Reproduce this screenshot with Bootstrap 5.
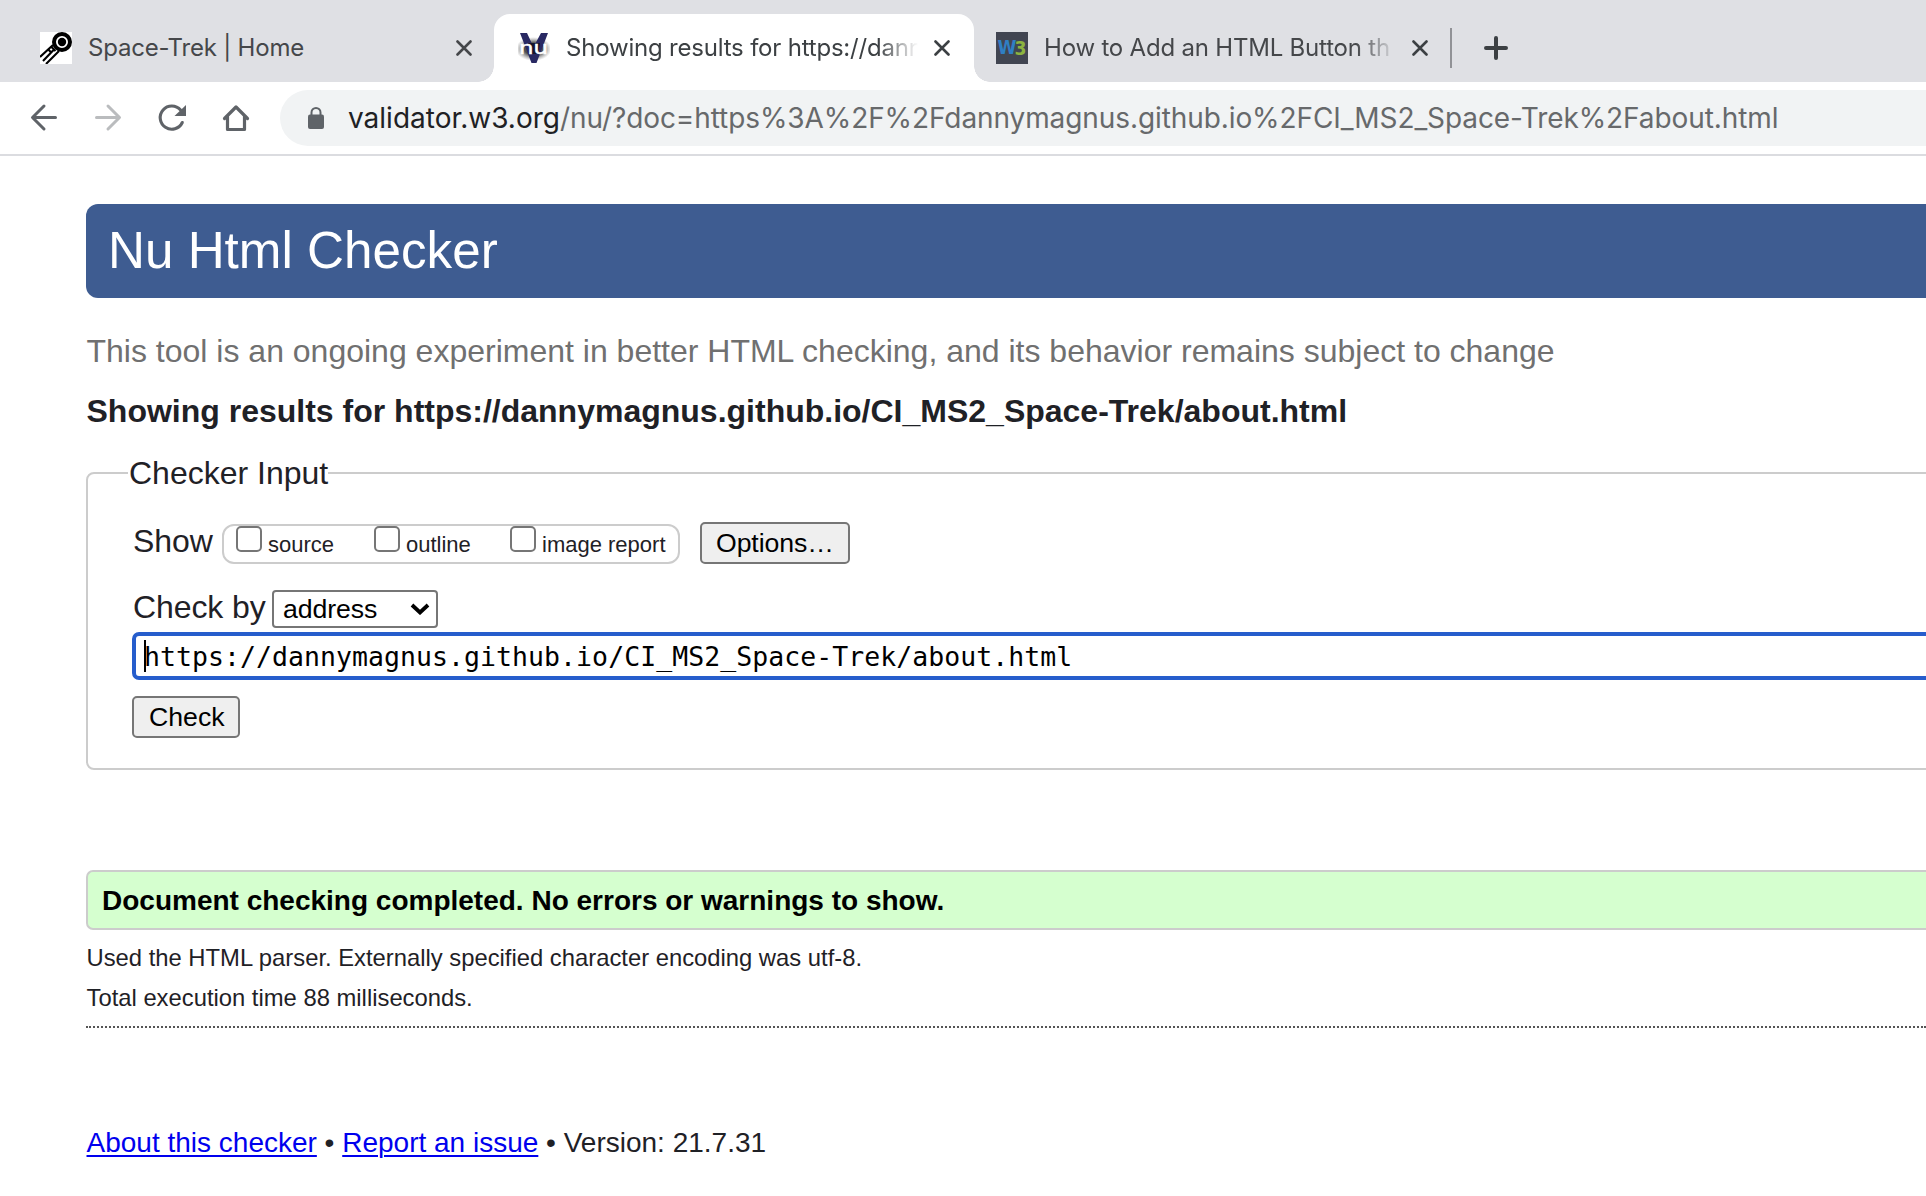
<!DOCTYPE html>
<html lang="en">
<head>
<meta charset="utf-8">
<title>Showing results for https://dannymagnus.github.io/CI_MS2_Space-Trek/about.html</title>
<link href="https://cdn.jsdelivr.net/npm/bootstrap@5.3.0/dist/css/bootstrap.min.css" rel="stylesheet">
<style>
  body { font-family: "Liberation Sans", Arial, sans-serif; color: #1f2126; background: #fff; overflow: hidden; }

  /* browser chrome */
  .chrome-ui { font-family: Inter, Roboto, sans-serif; }
  .tab-strip { height: 82px; padding-top: 14px; background: #dfe0e4; }
  .tab-item { height: 68px; color: #45474a; font-size: 24px; line-height: 67px; }
  .tab-first { width: 494px; padding: 0 22px 0 40px; }
  .tab-active { width: 480px; padding: 0 24px 0 24px; background: #fff; border-radius: 16px 16px 0 0; color: #3c4043; }
  .tab-active::before, .tab-active::after { content: ""; position: absolute; bottom: 0; width: 16px; height: 16px; }
  .tab-active::before { left: -16px; background: radial-gradient(circle at 0 0, transparent 15.5px, #fff 16px); }
  .tab-active::after { right: -16px; background: radial-gradient(circle at 100% 0, transparent 15.5px, #fff 16px); }
  .tab-last { width: 476px; padding: 0 22px; }
  .tab-title { height: 68px; margin-left: 16px; overflow: hidden; letter-spacing: -.2px; }
  .fade-title { -webkit-mask-image: linear-gradient(90deg, #000 calc(100% - 40px), transparent); mask-image: linear-gradient(90deg, #000 calc(100% - 40px), transparent); }
  .tab-close { margin-left: 16px; }
  .tab-rule { width: 2px; height: 40px; background: #919296; }
  .new-tab { margin-left: 32px; }

  .tool-strip { height: 74px; border-bottom: 2px solid #dbdce0; padding: 8px 0 8px 28px; }
  .nav-icons { gap: 32px; width: 252px; height: 56px; }
  .omnibox { height: 56px; border-radius: 28px 0 0 28px; background: #f1f3f4; padding-left: 28px; color: #67696b; font-size: 28px; line-height: 56px; letter-spacing: -.09px; }
  .omnibox .host { color: #202124; letter-spacing: 0; }
  .omnibox-url { margin-left: 24px; }

  /* checker page */
  .checker-page { padding: 48px 0 0 86px; }
  .banner { height: 94px; line-height: 93px; padding-left: 22px; border-radius: 12px 0 0 12px; background: #3e5c91; color: #fff; font-size: 51.2px; font-weight: 400; }
  .tagline { margin-top: 33px; font-size: 32px; line-height: 40px; color: #707070; }
  .results-title { margin-top: 20px; font-size: 32px; line-height: 40px; font-weight: 700; }
  .tagline, .results-title, .details div, .about { text-indent: .5px; }
  .input-set { height: 315px; margin: 24px -20px 0 0; border: 2px solid #ccc; border-radius: 8px; padding: 31px 0 0 44px; }
  .input-set legend { float: none; width: 200px; height: 36px; margin: 0 0 0 -4px; padding: 0 0 0 1px; font-size: 32px; line-height: 36px; white-space: nowrap; }
  .big-label { font-size: 32px; line-height: 38px; padding-left: 1px; letter-spacing: -.1px; }
  .show-label { width: 90px; }
  .by-label { width: 140px; line-height: 34px; }
  .show-box { width: 458px; height: 40px; margin-top: 2px; padding-left: 12px; border: 2px solid #ccc; border-radius: 12px; font-size: 22px; line-height: 38px; }
  .tick { appearance: none; width: 26px; height: 26px; margin: 0 6px 0 0; border: 2px solid #767676; border-radius: 5px; background: #fff; }
  .ui-btn { height: 42px; border: 2px solid #767676; border-radius: 5px; background: #efefef; color: #000; font-size: 26.67px; line-height: 38px; padding: 0 0 0 15px; text-align: left; }
  .btn-options { width: 150px; margin-left: 20px; padding-left: 14px; letter-spacing: -.1px; }
  .btn-check-doc { width: 108px; margin-top: 16px; }
  .by-select { width: 166px; height: 38px; border: 2px solid #767676; border-radius: 4px; padding: 0 6px 0 9px; color: #000; font-size: 26.67px; line-height: 34px; letter-spacing: -.1px; }
  .url-field { height: 48px; margin-top: 4px; border: 4px solid #265dcc; border-radius: 7px; padding-left: 8px; color: #000; font: 26.5px/41px "DejaVu Sans Mono", monospace; letter-spacing: .05px; }
  .caret { left: 8px; top: 4px; width: 2px; height: 32px; background: #000; }
  .success-box { height: 60px; margin-top: 100px; padding-left: 14px; border: 2px solid #ccc; border-right: 0; border-radius: 7px 0 0 7px; background: #d5ffcf; color: #000; font-size: 28px; line-height: 58px; font-weight: 700; }
  .details { margin-top: 8px; padding-bottom: 8px; border-bottom: 2px dotted #555; font-size: 23.8px; line-height: 40px; }
  .about { margin-top: 94px; font-size: 28px; line-height: 42px; }
  .about a { color: #00e; text-decoration: underline; text-decoration-thickness: 2px; text-underline-offset: 3px; }
</style>
<script src="https://cdn.jsdelivr.net/npm/bootstrap@5.3.0/dist/js/bootstrap.bundle.min.js"></script>
</head>
<body>
<header class="chrome-ui text-nowrap">
  <div class="tab-strip d-flex">
    <div class="tab-item tab-first d-flex align-items-center">
      <svg width="32" height="32" viewBox="0 0 32 32" class="flex-shrink-0"><path fill="#fff" d="M0 0h32v32H0z"/><circle cx="22" cy="10" r="8" fill="#fff" stroke="#000" stroke-width="4"/><circle cx="22" cy="10" r="4.2"/><path d="M13 13 0 25M19 19 6 32M14.500 17 3 29M8 17l3.500 4M11.500 15l4 4" stroke="#000" stroke-width="2.100" fill="none"/></svg>
      <div class="tab-title flex-grow-1">Space-Trek | Home</div>
      <svg width="16" height="16" viewBox="0 0 16 16"><path d="m1.500 1.500 13 13m0-13-13 13" stroke="#45474a" stroke-width="2.600" stroke-linecap="round"/></svg>
    </div>
    <div class="tab-item tab-active position-relative d-flex align-items-center">
      <svg width="32" height="32" viewBox="0 0 32 32" class="flex-shrink-0"><defs><radialGradient id="halo"><stop offset=".5" stop-color="#222" stop-opacity=".8"/><stop offset="1" stop-color="#777" stop-opacity="0"/></radialGradient></defs><ellipse cx="15.500" cy="17" rx="18" ry="12" fill="url(#halo)"/><path d="M2 1h7l6.500 14L23 1h7L18.500 31h-5z" fill="#292963"/><path d="M10 11h12l-2 11h-8z" fill="#15152c"/><text x="1" y="22" font-family="DejaVu Sans" font-size="18" fill="#fff" stroke="#fff" stroke-width=".5" textLength="29" lengthAdjust="spacingAndGlyphs">nu</text></svg>
      <div class="tab-title fade-title" style="width:352px">Showing results for https://dann</div>
      <svg width="16" height="16" viewBox="0 0 16 16" class="tab-close flex-shrink-0"><path d="m1.500 1.500 13 13m0-13-13 13" stroke="#3c4043" stroke-width="2.600" stroke-linecap="round"/></svg>
    </div>
    <div class="tab-item tab-last d-flex align-items-center">
      <svg width="32" height="32" viewBox="0 0 32 32" class="flex-shrink-0"><path fill="#414551" d="M0 0h32v32H0z"/><text x="1.500" y="22" font-family="DejaVu Sans" font-size="19" font-weight="700" fill="#2f7fc3" textLength="19" lengthAdjust="spacingAndGlyphs">W</text><text x="18.500" y="23" font-family="DejaVu Sans" font-size="20" font-weight="700" fill="#8cb43f" textLength="12" lengthAdjust="spacingAndGlyphs">3</text></svg>
      <div class="tab-title fade-title" style="width:352px">How to Add an HTML Button th</div>
      <svg width="16" height="16" viewBox="0 0 16 16" class="tab-close flex-shrink-0"><path d="m1.500 1.500 13 13m0-13-13 13" stroke="#3c4043" stroke-width="2.600" stroke-linecap="round"/></svg>
    </div>
    <div class="tab-item d-flex align-items-center">
      <div class="tab-rule"></div>
      <svg class="new-tab" width="24" height="24" viewBox="0 0 24 24"><path d="M12 2v20M2 12h20" stroke="#3c4043" stroke-width="4" stroke-linecap="round"/></svg>
    </div>
  </div>
  <div class="tool-strip d-flex">
    <div class="nav-icons d-flex align-items-center flex-shrink-0">
      <svg width="32" height="32" viewBox="0 0 32 32" fill="none" stroke="#5f6368" stroke-width="3" stroke-linecap="round" stroke-linejoin="round"><path d="M27.500 15.500H5M16 4 4.500 15.500 16 27"/></svg>
      <svg width="32" height="32" viewBox="0 0 32 32" fill="none" stroke="#babcbe" stroke-width="3" stroke-linecap="round" stroke-linejoin="round"><path d="M4.500 15.500H27M16 4l11.500 11.500L16 27"/></svg>
      <svg width="32" height="32" viewBox="0 0 32 32"><path d="M26.300 20.500A11.600 11.600 0 1 1 24.600 8" fill="none" stroke="#5f6368" stroke-width="3.100" stroke-linecap="round"/><path d="M30 3v11H18.500z" fill="#5f6368"/></svg>
      <svg width="32" height="32" viewBox="0 0 32 32" fill="none" stroke="#5f6368" stroke-width="3.200" stroke-linejoin="round" stroke-linecap="round"><path d="M7.500 14v13.500h17V14M4.500 16.500 16 5l11.500 11.500"/></svg>
    </div>
    <div class="omnibox d-flex align-items-center flex-grow-1">
      <svg width="16" height="24" viewBox="0 0 16 24"><path d="M3.500 9V6.500a4.500 4.500 0 0 1 9 0V9" fill="none" stroke="#5f6368" stroke-width="2"/><rect y="8.500" width="16" height="14.500" rx="2" fill="#5f6368"/></svg>
      <div class="omnibox-url"><span class="host">validator.w3.org</span>/nu/?doc=https%3A%2F%2Fdannymagnus.github.io%2FCI_MS2_Space-Trek%2Fabout.html</div>
    </div>
  </div>
</header>

<main class="checker-page text-nowrap">
  <h1 class="banner mb-0">Nu Html Checker</h1>
  <p class="tagline mb-0">This tool is an ongoing experiment in better HTML checking, and its behavior remains subject to change</p>
  <h2 class="results-title mb-0">Showing results for https://dannymagnus.github.io/CI_MS2_Space-Trek/about.html</h2>

  <fieldset class="input-set">
    <legend>Checker Input</legend>
    <div class="d-flex align-items-start">
      <span class="big-label show-label">Show</span>
      <div class="show-box d-flex">
        <label class="d-flex" style="width:138px"><input type="checkbox" class="tick">source</label>
        <label class="d-flex" style="width:136px"><input type="checkbox" class="tick">outline</label>
        <label class="d-flex"><input type="checkbox" class="tick">image report</label>
      </div>
      <button type="button" class="ui-btn btn-options">Options…</button>
    </div>
    <div class="d-flex align-items-start" style="margin-top:26px">
      <span class="big-label by-label">Check by</span>
      <div class="by-select d-flex justify-content-between align-items-center">
        <span>address</span>
        <svg width="20" height="12" viewBox="0 0 20 12"><path d="m2 2 8 7.500L18 2" fill="none" stroke="#000" stroke-width="3.800"/></svg>
      </div>
    </div>
    <div class="url-field position-relative">https://dannymagnus.github.io/CI_MS2_Space-Trek/about.html<span class="caret position-absolute"></span></div>
    <button type="button" class="ui-btn btn-check-doc d-block">Check</button>
  </fieldset>

  <div class="success-box">Document checking completed. No errors or warnings to show.</div>
  <div class="details">
    <div>Used the HTML parser. Externally specified character encoding was utf-8.</div>
    <div>Total execution time 88 milliseconds.</div>
  </div>
  <footer class="about"><a href="#">About this checker</a> • <a href="#">Report an issue</a> • Version: 21.7.31</footer>
</main>
</body>
</html>
